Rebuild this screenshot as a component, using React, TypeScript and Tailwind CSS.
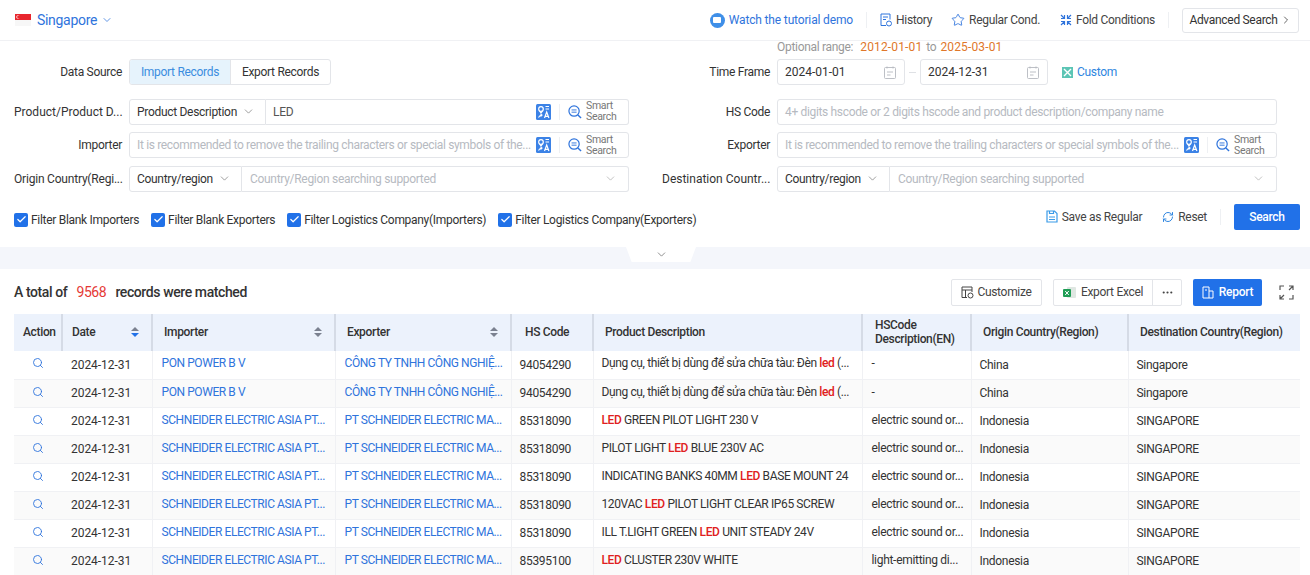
import { ChevronDown, ChevronRight, Search, Star, RefreshCw, Ellipsis, Check } from "lucide-react";
import type { ReactNode } from "react";

type Row = {
  importer: string;
  exporter: string;
  hs: string;
  desc: [string, string, string];
  hsDesc: string;
  origin: string;
  dest: string;
};

const vnDesc: [string, string, string] = ["Dụng cụ, thiết bị dùng để sửa chữa tàu: Đèn ", "led", " (..."];
const schneider = "SCHNEIDER ELECTRIC ASIA PT...";
const ptSchneider = "PT SCHNEIDER ELECTRIC MA...";
const sound = "electric sound or...";

const rows: Row[] = [
  { importer: "PON POWER B V", exporter: "CÔNG TY TNHH CÔNG NGHIỆ...", hs: "94054290", desc: vnDesc, hsDesc: "-", origin: "China", dest: "Singapore" },
  { importer: "PON POWER B V", exporter: "CÔNG TY TNHH CÔNG NGHIỆ...", hs: "94054290", desc: vnDesc, hsDesc: "-", origin: "China", dest: "Singapore" },
  { importer: schneider, exporter: ptSchneider, hs: "85318090", desc: ["", "LED", " GREEN PILOT LIGHT 230 V"], hsDesc: sound, origin: "Indonesia", dest: "SINGAPORE" },
  { importer: schneider, exporter: ptSchneider, hs: "85318090", desc: ["PILOT LIGHT ", "LED", " BLUE 230V AC"], hsDesc: sound, origin: "Indonesia", dest: "SINGAPORE" },
  { importer: schneider, exporter: ptSchneider, hs: "85318090", desc: ["INDICATING BANKS 40MM ", "LED", " BASE MOUNT 24"], hsDesc: sound, origin: "Indonesia", dest: "SINGAPORE" },
  { importer: schneider, exporter: ptSchneider, hs: "85318090", desc: ["120VAC ", "LED", " PILOT LIGHT CLEAR IP65 SCREW"], hsDesc: sound, origin: "Indonesia", dest: "SINGAPORE" },
  { importer: schneider, exporter: ptSchneider, hs: "85318090", desc: ["ILL T.LIGHT GREEN ", "LED", " UNIT STEADY 24V"], hsDesc: sound, origin: "Indonesia", dest: "SINGAPORE" },
  { importer: schneider, exporter: ptSchneider, hs: "85395100", desc: ["", "LED", " CLUSTER 230V WHITE"], hsDesc: "light-emitting di...", origin: "Indonesia", dest: "SINGAPORE" },
];

function SgFlag() {
  return (
    <svg width="16" height="12" viewBox="0 0 16 12">
      <rect width="16" height="6" fill="#e8262d" />
      <rect y="6" width="16" height="6" fill="#f7f7f7" />
      <circle cx="3" cy="3" r="1.7" fill="#fff" />
      <circle cx="3.7" cy="3" r="1.6" fill="#e8262d" />
    </svg>
  );
}

function TranslateIcon() {
  return (
    <svg width="15" height="16" viewBox="0 0 15 16">
      <rect width="15" height="16" rx="1.5" fill="#3b82e6" />
      <circle cx="5" cy="5" r="2.3" fill="none" stroke="#fff" strokeWidth="1.2" />
      <path d="M3.500 7l1.500 2 1.500-2M9.500 2.500h3.500M9.500 5h3.500" fill="none" stroke="#fff" strokeWidth="1.1" />
      <path d="M2.500 13.500c1-2 2-2.500 3.500-2.500M4.500 10l1.500 1-1.500 1.500" fill="none" stroke="#fff" strokeWidth="1.1" />
      <path d="M8.500 14l2.200-6 2.200 6M9.300 12.300h2.800" fill="none" stroke="#fff" strokeWidth="1.200" />
    </svg>
  );
}

function SmartIcon() {
  return (
    <svg width="14" height="14" viewBox="0 0 15 15" fill="none" stroke="#2f74dc">
      <circle cx="6.500" cy="6.500" r="5.500" strokeWidth="1.300" />
      <path d="M10.600 10.600L14 14" strokeWidth="1.500" />
      <path d="M3.800 5.300h5.400M3.800 7.700h5.400" strokeWidth="1" />
    </svg>
  );
}

function SmartSearch() {
  return (
    <div className="flex shrink-0 items-center">
      <div className="h-[16px] w-px bg-[#eef0f3]" />
      <div className="ml-[8px] mr-[10px] flex items-center gap-[4px]">
        <SmartIcon />
        <div className="w-[32px] text-[10.5px] leading-[10px] text-[#777]">
          <div>Smart</div>
          <div className="mt-[1px]">Search</div>
        </div>
      </div>
    </div>
  );
}

function CalendarIcon() {
  return (
    <svg width="12" height="13" viewBox="0 0 12 13" fill="none" stroke="#b5b9c0" strokeWidth="0.9">
      <rect x="0.5" y="1.5" width="11" height="11" rx="1" />
      <path d="M3 0.5v2M9 0.5v2M3 6h6M3 9h3.500" />
    </svg>
  );
}

function FieldRow({ label, labelClass = "", children }: { label: string; labelClass?: string; children: ReactNode }) {
  return (
    <div className="flex h-[26px] items-center gap-[7px]">
      <div className={`w-[108px] shrink-0 whitespace-nowrap text-right text-[12px] text-[#333] ${labelClass}`}>{label}</div>
      {children}
    </div>
  );
}

function Box({ className = "", children }: { className?: string; children: ReactNode }) {
  return <div className={`flex h-[26px] items-center whitespace-nowrap rounded-[3px] border border-[#e3e5e9] bg-white ${className}`}>{children}</div>;
}

function TextField({ placeholder, smart }: { placeholder: string; smart?: boolean }) {
  return (
    <Box className="w-[500px] pl-[7px]">
      <div className="min-w-0 flex-1 whitespace-nowrap text-[12px] tracking-[-0.34px] text-[#b6bac1]">{placeholder}</div>
      {smart && (
        <>
          <div className="mr-[8px] shrink-0">
            <TranslateIcon />
          </div>
          <SmartSearch />
        </>
      )}
    </Box>
  );
}

function CountrySelect() {
  return (
    <div className="flex w-[500px]">
      <Box className="w-[113px] shrink-0 justify-between rounded-r-none pl-[7px] pr-[10px] text-[12px] text-[#333]">
        Country/region
        <ChevronDown size={13} strokeWidth={1.3} className="text-[#777]" />
      </Box>
      <Box className="min-w-0 flex-1 justify-between rounded-l-none border-l-0 pl-[8px] pr-[11px] text-[12px] text-[#b6bac1]">
        Country/Region searching supported
        <ChevronDown size={13} strokeWidth={1.3} className="text-[#aaa]" />
      </Box>
    </div>
  );
}

function Filter({ label }: { label: string }) {
  return (
    <label className="flex items-center gap-[3px] text-[12px] text-[#333]">
      <span className="flex h-[14px] w-[14px] items-center justify-center rounded-[2px] bg-[#2171e8]">
        <Check size={11} strokeWidth={2.6} className="text-white" />
      </span>
      {label}
    </label>
  );
}

function ToolLink({ icon, children }: { icon: ReactNode; children: ReactNode }) {
  return (
    <div className="flex items-center gap-[4px] text-[12px] text-[#444]">
      {icon}
      {children}
    </div>
  );
}

function Sort({ active }: { active?: boolean }) {
  return (
    <span className="flex flex-col gap-[2px]">
      <span className="h-0 w-0 border-x-[4px] border-b-[4px] border-x-transparent border-b-[#7b8190]" />
      <span className={`h-0 w-0 border-x-[4px] border-t-[4px] border-x-transparent ${active ? "border-t-[#2171e8]" : "border-t-[#7b8190]"}`} />
    </span>
  );
}

function Th({ className = "", children }: { className?: string; children: ReactNode }) {
  return <th className={`border-r-2 border-[#d5dbe6] bg-[#ecf2fc] pb-[2px] text-left text-[12px] font-medium tracking-[-0.35px] text-[#333] last:border-r-0 ${className}`}>{children}</th>;
}

export default function App() {
  return (
    <div className="h-[575px] w-[1310px] overflow-hidden bg-white font-['Roboto',sans-serif] tracking-[-0.3px]">
      <header className="flex h-[41px] items-center border-b border-[#f0f1f4] pl-[15px] pr-[11px]">
        <SgFlag />
        <span className="ml-[6px] text-[14px] text-[#2f74dc]">Singapore</span>
        <ChevronDown size={12} strokeWidth={1.5} className="ml-[4px] text-[#2f74dc]" />
        <div className="ml-auto flex items-center">
          <span className="flex h-[15px] w-[15px] items-center justify-center rounded-full bg-[#3f8fe8]">
            <span className="h-[6px] w-[8px] rounded-[1px] bg-white" />
          </span>
          <span className="ml-[4px] text-[12px] tracking-[-0.15px] text-[#2f74dc]">Watch the tutorial demo</span>
          <div className="mx-[13px] h-[16px] w-px bg-[#eef0f3]" />
          <ToolLink
            icon={
              <svg width="12" height="14" viewBox="0 0 12 14" fill="none" stroke="#2f74dc" strokeWidth="1">
                <path d="M6 12.500H1V1h9v5.500M3 4h5M3 6.500h3" />
                <circle cx="9" cy="10.500" r="2.500" />
              </svg>
            }
          >
            History
          </ToolLink>
          <div className="w-[19px]" />
          <ToolLink icon={<Star size={14} strokeWidth={1.5} className="text-[#2f74dc]" />}>Regular Cond.</ToolLink>
          <div className="w-[20px]" />
          <ToolLink
            icon={
              <svg width="12" height="12" viewBox="0 0 12 12" fill="none" stroke="#2f74dc" strokeWidth="1.2">
                <path d="M1 1l3 3M4.500 1v3.500H1M11 1L8 4M7.500 1v3.500H11M1 11l3-3M4.500 11V7.500H1M11 11L8 8M7.500 11V7.500H11" />
              </svg>
            }
          >
            Fold Conditions
          </ToolLink>
          <div className="mx-[13px] h-[16px] w-px bg-[#eef0f3]" />
          <button className="flex h-[25px] w-[117px] items-center justify-center gap-[2px] rounded-[3px] border border-[#e3e5e9] text-[12px] text-[#333]">
            Advanced Search
            <ChevronRight size={12} strokeWidth={1.5} />
          </button>
        </div>
      </header>

      <section className="flex h-[206px] flex-col pl-[14px] pr-[10px]">
        <div className="flex gap-[33px]">
          <div className="flex w-[615px] flex-col gap-[7.5px] pt-[18px]">
            <FieldRow label="Data Source">
              <div className="flex h-[26px] overflow-hidden rounded-[3px] border border-[#e3e5e9] text-[12px]">
                <div className="flex w-[100px] items-center justify-center bg-[#e6f3fc] text-[#3b8ddf]">Import Records</div>
                <div className="flex w-[100px] items-center justify-center border-l border-[#e3e5e9] text-[#333]">Export Records</div>
              </div>
            </FieldRow>
            <div className="mt-[6px]">
              <FieldRow label="Product/Product D..." labelClass="tracking-[0px]">
                <div className="flex w-[500px]">
                  <Box className="w-[137px] shrink-0 justify-between rounded-r-none pl-[7px] pr-[10px] text-[12px] text-[#333]">
                    Product Description
                    <ChevronDown size={13} strokeWidth={1.3} className="text-[#777]" />
                  </Box>
                  <Box className="min-w-0 flex-1 rounded-l-none border-l-0 pl-[7px]">
                    <div className="flex-1 text-[12px] text-[#555]">LED</div>
                    <div className="mr-[8px]">
                      <TranslateIcon />
                    </div>
                    <SmartSearch />
                  </Box>
                </div>
              </FieldRow>
            </div>
            <FieldRow label="Importer">
              <TextField placeholder="It is recommended to remove the trailing characters or special symbols of the..." smart />
            </FieldRow>
            <FieldRow label="Origin Country(Regi..." labelClass="tracking-[-0.2px]">
              <CountrySelect />
            </FieldRow>
          </div>

          <div className="flex w-[615px] flex-col gap-[7.5px]">
            <div className="-mb-[7.5px] ml-[115px] flex h-[15px] items-end text-[12px] text-[#999]">
              Optional range:
              <span className="ml-[7px] tracking-[0.15px] text-[#e0772a]">2012-01-01</span>
              <span className="mx-[4px]">to</span>
              <span className="tracking-[0.15px] text-[#e0772a]">2025-03-01</span>
            </div>
            <div className="mt-[3px]">
              <FieldRow label="Time Frame">
                <div className="flex items-center">
                  <Box className="w-[128px] justify-between pl-[7px] pr-[8px] text-[12px] tracking-[0px] text-[#333]">
                    2024-01-01
                    <CalendarIcon />
                  </Box>
                  <div className="mx-[4px] h-px w-[7px] bg-[#dfe1e5]" />
                  <Box className="w-[128px] justify-between pl-[7px] pr-[8px] text-[12px] tracking-[0px] text-[#333]">
                    2024-12-31
                    <CalendarIcon />
                  </Box>
                </div>
                <div className="ml-[7px] flex items-center gap-[4px] text-[12px] text-[#2f86e0]">
                  <svg width="11" height="11" viewBox="0 0 11 11">
                    <rect width="11" height="11" fill="#5cc5b5" />
                    <path d="M2 2l7 7M9 2L2 9" stroke="#fff" strokeWidth="1.4" />
                  </svg>
                  Custom
                </div>
              </FieldRow>
            </div>
            <div className="mt-[6px]">
              <FieldRow label="HS Code">
                <TextField placeholder="4+ digits hscode or 2 digits hscode and product description/company name" />
              </FieldRow>
            </div>
            <FieldRow label="Exporter">
              <TextField placeholder="It is recommended to remove the trailing characters or special symbols of the..." smart />
            </FieldRow>
            <FieldRow label="Destination Countr..." labelClass="tracking-[0px]">
              <CountrySelect />
            </FieldRow>
          </div>
        </div>

        <div className="mt-[12px] flex items-start justify-between">
          <div className="mt-[7px] flex gap-[12px]">
            <Filter label="Filter Blank Importers" />
            <Filter label="Filter Blank Exporters" />
            <Filter label="Filter Logistics Company(Importers)" />
            <Filter label="Filter Logistics Company(Exporters)" />
          </div>
          <div className="flex items-center">
            <ToolLink
              icon={
                <svg width="12" height="13" viewBox="0 0 12 13" fill="none" stroke="#3b9be8" strokeWidth="1.200">
                  <path d="M1 1h7.500L11 3.500V12H1zM3 7h6M3 9.500h6M3.500 1v2.500h4V1" />
                </svg>
              }
            >
              Save as Regular
            </ToolLink>
            <div className="w-[20px]" />
            <ToolLink icon={<RefreshCw size={12} strokeWidth={2} className="text-[#2f86e0]" />}>Reset</ToolLink>
            <div className="mx-[13px] h-[16px] w-px bg-[#eef0f3]" />
            <button className="h-[26px] w-[66px] rounded-[2px] bg-[#2171e8] text-[12px] font-medium text-white">Search</button>
          </div>
        </div>
      </section>

      <div className="flex h-[22px] justify-center bg-[#f4f6fb] pl-[12px]">
        <div className="flex h-[15px] w-[70px] items-center justify-center bg-white [clip-path:polygon(0_0,100%_0,92%_100%,8%_100%)]">
          <ChevronDown size={13} strokeWidth={1.5} className="text-[#777]" />
        </div>
      </div>

      <div className="flex h-[45px] items-center pl-[14px] pr-[16px] pt-[1px]">
        <div className="text-[14px] font-medium tracking-[-0.4px] text-[#333]">
          A total of <span className="mx-[6px] font-normal text-[#e53935]">9568</span> records were matched
        </div>
        <div className="ml-auto flex items-center">
          <button className="flex h-[27px] w-[91px] items-center justify-center gap-[3px] rounded-[2px] border border-[#e3e5e9] text-[12px] text-[#444]">
            <svg width="13" height="13" viewBox="0 0 13 13" fill="none" stroke="#444" strokeWidth="1">
              <path d="M6 11.500H1V1h10v5M1 4h10M4.500 4v7.500" />
              <circle cx="9.500" cy="9.500" r="2.500" />
            </svg>
            Customize
          </button>
          <div className="ml-[11px] flex h-[27px] rounded-[2px] border border-[#e3e5e9] text-[12px] text-[#444]">
            <div className="flex w-[98px] items-center justify-center gap-[5px]">
              <svg width="13" height="13" viewBox="0 0 13 13">
                <rect x="4" y="1" width="9" height="11" rx="1" fill="#dfe7e2" />
                <rect y="3" width="8" height="8" rx="1" fill="#1f9d55" />
                <path d="M2.200 5l3.600 4M5.800 5L2.200 9" stroke="#fff" strokeWidth="1" />
              </svg>
              Export Excel
            </div>
            <div className="flex w-[29px] items-center justify-center border-l border-[#e3e5e9]">
              <Ellipsis size={13} />
            </div>
          </div>
          <button className="ml-[11px] flex h-[27px] w-[69px] items-center justify-center gap-[5px] rounded-[2px] bg-[#2171e8] text-[12px] font-medium text-white">
            <svg width="12" height="13" viewBox="0 0 12 13" fill="none" stroke="#fff" strokeWidth="1">
              <path d="M1 1h6v11H1zM7 5h4v7H7M3 4h2" />
            </svg>
            Report
          </button>
          <svg className="ml-[17px]" width="15" height="15" viewBox="0 0 15 15" fill="none" stroke="#555" strokeWidth="1.200">
            <path d="M1 5V1h4M10 1h4v4M14 1l-4 4M1 10v4h4M1 14l4-4M14 10v4h-4" />
          </svg>
        </div>
      </div>

      <div className="pl-[14px] pr-[10px]">
        <table className="w-[1286px] table-fixed border-collapse">
          <colgroup>
            <col className="w-[48px]" />
            <col className="w-[90px]" />
            <col className="w-[183px]" />
            <col className="w-[176px]" />
            <col className="w-[82px]" />
            <col className="w-[269px]" />
            <col className="w-[109px]" />
            <col className="w-[157px]" />
            <col className="w-[172px]" />
          </colgroup>
          <thead>
            <tr className="h-[37px]">
              <Th className="pl-[9px]">Action</Th>
              <Th className="pl-[9px] pr-[12px]">
                <div className="flex items-center justify-between">
                  Date <Sort active />
                </div>
              </Th>
              <Th className="pl-[11px] pr-[12px]">
                <div className="flex items-center justify-between">
                  Importer <Sort />
                </div>
              </Th>
              <Th className="pl-[11px] pr-[12px]">
                <div className="flex items-center justify-between">
                  Exporter <Sort />
                </div>
              </Th>
              <Th className="pl-[13px]">HS Code</Th>
              <Th className="pl-[11px]">Product Description</Th>
              <Th className="pl-[12px] leading-[14px]">
                HSCode
                <br />
                Description(EN)
              </Th>
              <Th className="pl-[11px]">Origin Country(Region)</Th>
              <Th className="pl-[11px]">Destination Country(Region)</Th>
            </tr>
          </thead>
          <tbody className="text-[12px] text-[#333]">
            {rows.map((r, i) => (
              <tr key={i} className={`h-[28px] border-b border-[#f0f1f4] ${i % 2 === 1 ? "bg-[#fafafa]" : "bg-white"}`}>
                <td className="relative p-0 shadow-[3px_0_4px_rgba(0,0,0,0.07)]">
                  <div className="flex justify-center pb-[3px]">
                    <Search size={12} strokeWidth={1.8} className="text-[#2f74dc]" />
                  </div>
                </td>
                <td className="border-r border-[#f0f1f4] pl-[9px] tracking-[-0.05px]">2024-12-31</td>
                <td className="whitespace-nowrap border-r border-[#f0f1f4] pb-[3px] pl-[9px] tracking-[-0.42px] text-[#2f74dc]">{r.importer}</td>
                <td className="whitespace-nowrap border-r border-[#f0f1f4] pb-[3px] pl-[9px] tracking-[-0.43px] text-[#2f74dc]">{r.exporter}</td>
                <td className="border-r border-[#f0f1f4] pl-[8px]">{r.hs}</td>
                <td className="whitespace-nowrap border-r border-[#f0f1f4] pb-[3px] pl-[8px] tracking-[-0.38px]">
                  {r.desc[0]}
                  <span className="font-medium text-[#e02020]">{r.desc[1]}</span>
                  {r.desc[2]}
                </td>
                <td className="whitespace-nowrap border-r border-[#f0f1f4] pb-[3px] pl-[9px]">{r.hsDesc}</td>
                <td className="border-r border-[#f0f1f4] pl-[8px]">{r.origin}</td>
                <td className="pl-[8px]">{r.dest}</td>
              </tr>
            ))}
          </tbody>
        </table>
      </div>
    </div>
  );
}
